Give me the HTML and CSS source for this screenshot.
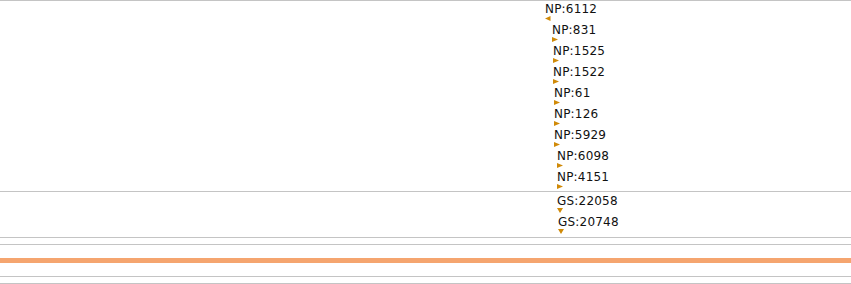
FILE: index.html
```html
<!DOCTYPE html>
<html>
<head>
<meta charset="utf-8">
<link rel="stylesheet" href="styles.css">
</head>
<body>
<div class="track track-main">
  <div class="node" style="--x:545px"><span class="label">NP:6112</span><svg class="tri" width="6" height="5" viewBox="0 0 6 5"><polygon points="5.5,0 5.5,5 0,2.5"/></svg></div>
  <div class="node" style="--x:552px"><span class="label">NP:831</span><svg class="tri" width="6" height="5" viewBox="0 0 6 5"><polygon points="0,0 6,2.5 0,5"/></svg></div>
  <div class="node" style="--x:553px"><span class="label">NP:1525</span><svg class="tri" width="6" height="5" viewBox="0 0 6 5"><polygon points="0,0 6,2.5 0,5"/></svg></div>
  <div class="node" style="--x:553px"><span class="label">NP:1522</span><svg class="tri" width="6" height="5" viewBox="0 0 6 5"><polygon points="0,0 6,2.5 0,5"/></svg></div>
  <div class="node" style="--x:554px"><span class="label">NP:61</span><svg class="tri" width="6" height="5" viewBox="0 0 6 5"><polygon points="0,0 6,2.5 0,5"/></svg></div>
  <div class="node" style="--x:554px"><span class="label">NP:126</span><svg class="tri" width="6" height="5" viewBox="0 0 6 5"><polygon points="0,0 6,2.5 0,5"/></svg></div>
  <div class="node" style="--x:554px"><span class="label">NP:5929</span><svg class="tri" width="6" height="5" viewBox="0 0 6 5"><polygon points="0,0 6,2.5 0,5"/></svg></div>
  <div class="node" style="--x:557px"><span class="label">NP:6098</span><svg class="tri" width="6" height="5" viewBox="0 0 6 5"><polygon points="0,0 6,2.5 0,5"/></svg></div>
  <div class="node" style="--x:557px"><span class="label">NP:4151</span><svg class="tri" width="6" height="5" viewBox="0 0 6 5"><polygon points="0,0 6,2.5 0,5"/></svg></div>
</div>
<div class="track track-gs">
  <div class="node" style="--x:557px"><span class="label">GS:22058</span><svg class="tri" width="6" height="5" viewBox="0 0 6 5"><polygon points="0,0 6,0 3,5"/></svg></div>
  <div class="node" style="--x:558px"><span class="label">GS:20748</span><svg class="tri" width="6" height="5" viewBox="0 0 6 5"><polygon points="0,0 6,0 3,5"/></svg></div>
</div>
<div class="track track-gap"></div>
<div class="track track-axis"><div class="bar"></div></div>
<div class="track track-thin"></div>
<div class="track track-end"></div>
</body>
</html>
```
FILE: styles.css
```css
html, body {
  margin: 0;
  padding: 0;
  background: #ffffff;
  overflow: hidden;
}
body {
  width: 851px;
  height: 284px;
  font-family: "DejaVu Sans", sans-serif;
  font-size: 12px;
  color: #111;
}
.track {
  border-top: 1px solid #c4c4c4;
}
.track-main {
  display: flex;
  flex-direction: column;
  padding-bottom: 1px;
}
.track-gs {
  display: flex;
  flex-direction: column;
  padding-top: 1px;
  padding-bottom: 2px;
}
.node {
  display: flex;
  flex-direction: column;
  align-items: flex-start;
  padding-left: var(--x);
  height: 21px;
}
.label {
  display: block;
  line-height: 16px;
  height: 15px;
  white-space: nowrap;
  letter-spacing: 0.2px;
}
.tri {
  display: block;
  fill: #d08a08;
}
.track-gap {
  height: 6px;
}
.track-axis {
  box-sizing: border-box;
  height: 32px;
  padding-top: 13px;
}
.bar {
  height: 5px;
  background: #f5a56f;
}
.track-thin {
  height: 6px;
}
.track-end {
  height: 0;
}
```
